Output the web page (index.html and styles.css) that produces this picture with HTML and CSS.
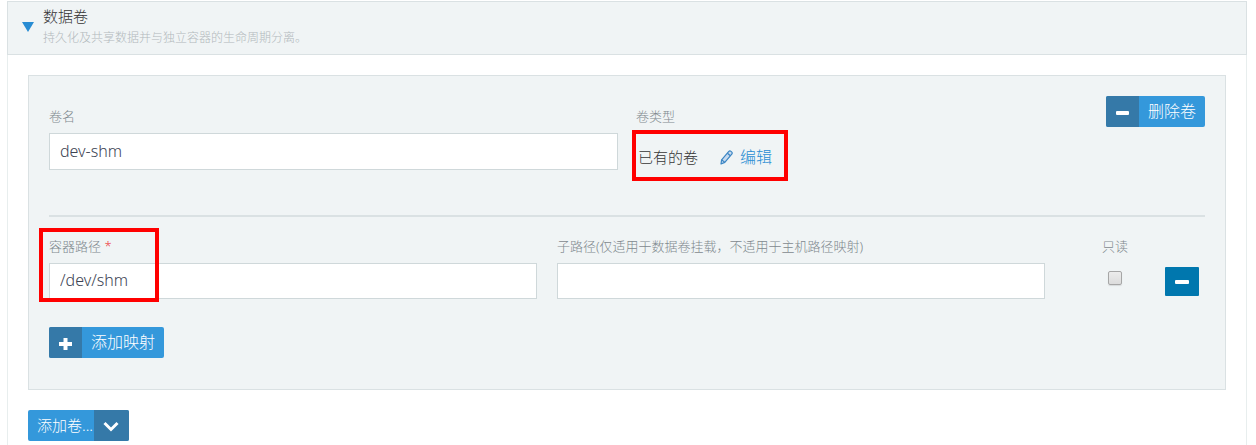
FILE: index.html
```html
<!DOCTYPE html>
<html lang="zh-CN">
<head>
  <meta charset="UTF-8" />
  <title>数据卷</title>
  <link rel="stylesheet" href="styles.css">
</head>
<body>
  <section class="accordion">
    <header class="accordion-header">
      <svg class="caret" width="12" height="10" viewBox="0 0 12 10"><path d="M0 0h12L6 10z" fill="#288cd3"/></svg>
      <div>
        <h2 class="title">数据卷</h2>
        <p class="description">持久化及共享数据并与独立容器的生命周期分离。</p>
      </div>
    </header>

    <div class="accordion-body">
      <form class="volume">
        <div class="volume-top">
          <div class="field">
            <label for="volumeName">卷名</label>
            <input class="text-input tall" type="text" id="volumeName" value="dev-shm" />
          </div>
          <div class="volume-side">
            <div class="field">
              <span class="label">卷类型</span>
              <div class="volume-type">
                <span>已有的卷</span>
                <a class="edit-link" href="#">
                  <svg width="13" height="16" viewBox="0 0 13 16" fill="none" stroke="#3b86c4" stroke-width="1.2" stroke-linejoin="round">
                    <path d="M1 15l.6-4.200L8.600 2.600q1.200-1.200 2.400-.200l.600.500q1.100 1 .200 2.300L4.800 13.400z" fill="#c6d9ee"/>
                    <path d="M7.400 4.200l3 2.600M1.600 10.800l3.200 2.600"/>
                  </svg>
                  编辑
                </a>
              </div>
              <div class="highlight highlight-type"></div>
            </div>
            <button type="button" class="btn">
              <span class="btn-icon"><svg width="13" height="13" viewBox="0 0 13 13"><rect y="5" width="13" height="4" rx="1" fill="#fff"/></svg></span>
              <span class="btn-text">删除卷</span>
            </button>
          </div>
        </div>

        <hr class="divider" />

        <div class="mapping">
          <div class="field">
            <label for="containerPath">容器路径 <span class="required">*</span></label>
            <input class="text-input" type="text" id="containerPath" value="/dev/shm" required />
            <div class="highlight highlight-path"></div>
          </div>
          <div class="field">
            <label for="subPath">子路径(仅适用于数据卷挂载，不适用于主机路径映射)</label>
            <input class="text-input" type="text" id="subPath" />
          </div>
          <div class="mapping-end">
            <div class="readonly">
              <label for="readOnly">只读</label>
              <input class="checkbox" type="checkbox" id="readOnly" />
            </div>
            <button type="button" class="btn-remove" aria-label="删除映射">
              <svg width="14" height="4" viewBox="0 0 14 4"><rect width="14" height="4" rx="1" fill="#fff"/></svg>
            </button>
          </div>
        </div>

        <button type="button" class="btn">
          <span class="btn-icon"><svg width="13" height="13" viewBox="0 0 13 13"><path d="M4.500 1h4v4H13v4H8.500v4h-4V9H0V5h4.500z" fill="#fff"/></svg></span>
          <span class="btn-text">添加映射</span>
        </button>
      </form>

      <button type="button" class="btn btn-add">
        <span class="btn-text">添加卷...</span>
        <span class="btn-icon"><svg width="16" height="11" viewBox="0 0 16 11"><path d="M1.500 2L8 8.500 14.500 2" fill="none" stroke="#fff" stroke-width="3"/></svg></span>
      </button>
    </div>
  </section>
</body>
</html>
```
FILE: styles.css
```css
* {
  box-sizing: border-box;
}

body {
  margin: 0;
  padding: 1px 9px 0 7px;
  min-height: 100vh;
  display: flex;
  flex-direction: column;
  background: #fff;
  color: #363636;
  font-family: "Noto Sans", "Noto Sans CJK SC", sans-serif;
  font-size: 15px;
  font-weight: 300;
  line-height: 20px;
}

input,
button {
  font-family: inherit;
  font-size: 16px;
  font-weight: inherit;
  line-height: 20px;
}

.accordion {
  flex: 1;
  border: 1px solid #e8eeee;
  border-top: none;
  border-bottom: none;
}

.accordion-header {
  display: flex;
  align-items: center;
  gap: 9px;
  height: 54px;
  margin: 0 -1px;
  padding: 0 14px 2px;
  background: #f0f4f5;
  border: 1px solid #dae1e3;
}

.title {
  margin: 0;
  font-size: 15px;
  line-height: 20px;
  font-weight: inherit;
}

.description {
  margin: 2px 0 0;
  color: #b2b9bc;
  font-size: 12px;
  line-height: 20px;
}

.accordion-body {
  padding: 20px;
}

.volume {
  margin-bottom: 20px;
  padding: 20px 20px 31px;
  background: #f0f4f5;
  border: 1px solid #dae1e3;
}

.volume-top {
  display: grid;
  grid-template-columns: 1fr 1fr;
  gap: 18px;
}

.volume-top .field {
  padding-top: 10px;
}

.volume-side {
  display: flex;
  justify-content: space-between;
  align-items: flex-start;
}

.field {
  position: relative;
}

label,
.label {
  display: block;
  margin-bottom: 7px;
  color: #7f898e;
  font-size: 13px;
  line-height: 20px;
}

.required {
  color: #ee3c44;
}

.text-input {
  display: block;
  width: 100%;
  height: 36px;
  padding: 0 10px 2px;
  background: #fff;
  border: 1px solid #cfd8da;
  color: #3c4353;
}

.text-input.tall {
  height: 37px;
}

.volume-type {
  display: flex;
  gap: 22px;
  padding: 14px 2px 0;
}

.edit-link {
  display: flex;
  align-items: center;
  gap: 7px;
  color: #288cd3;
  font-size: 16px;
  text-decoration: none;
}

.divider {
  height: 2px;
  margin: 45px 0 19px;
  border: none;
  background: #dae1e3;
}

.mapping {
  display: grid;
  grid-template-columns: 1fr 1fr 140px;
  gap: 20px;
  margin-bottom: 28px;
}

.mapping-end {
  display: flex;
  align-items: flex-start;
}

.readonly {
  display: flex;
  flex-direction: column;
  align-items: center;
  width: 100px;
}

.checkbox {
  appearance: none;
  width: 14px;
  height: 14px;
  margin: 8px 0 0;
  border: 1px solid #a6a6a6;
  border-radius: 2px;
  background: linear-gradient(#ececec, #dcdcdc);
  box-shadow: 0 1px 1px #d8dbdc;
}

.checkbox:checked {
  background: #288cd3;
}

.btn {
  display: inline-flex;
  height: 31px;
  padding: 0;
  border: none;
  border-radius: 2px;
  overflow: hidden;
  background: #3498db;
  color: #fff;
  cursor: pointer;
}

.btn-icon {
  display: flex;
  align-items: center;
  justify-content: center;
  width: 33px;
  height: 31px;
  padding-top: 2px;
  background: #3579a8;
}

.btn-text {
  padding: 5px 9px;
}

.btn-add {
  font-size: 15px;
}

.btn-add .btn-text {
  padding-right: 1px;
}

.btn-add .btn-icon {
  width: 35px;
}

.btn-remove {
  display: flex;
  align-items: center;
  justify-content: center;
  width: 34px;
  height: 29px;
  margin-top: 31px;
  padding: 0;
  border: none;
  border-radius: 1px;
  background: #0077ae;
  cursor: pointer;
}

/* red callout frames */
.highlight {
  position: absolute;
  border: 4px solid #f00;
  pointer-events: none;
}

.highlight-type {
  top: 34px;
  left: -4px;
  width: 156px;
  height: 51px;
}

.highlight-path {
  top: -8px;
  left: -10px;
  width: 120px;
  height: 74px;
}
```
